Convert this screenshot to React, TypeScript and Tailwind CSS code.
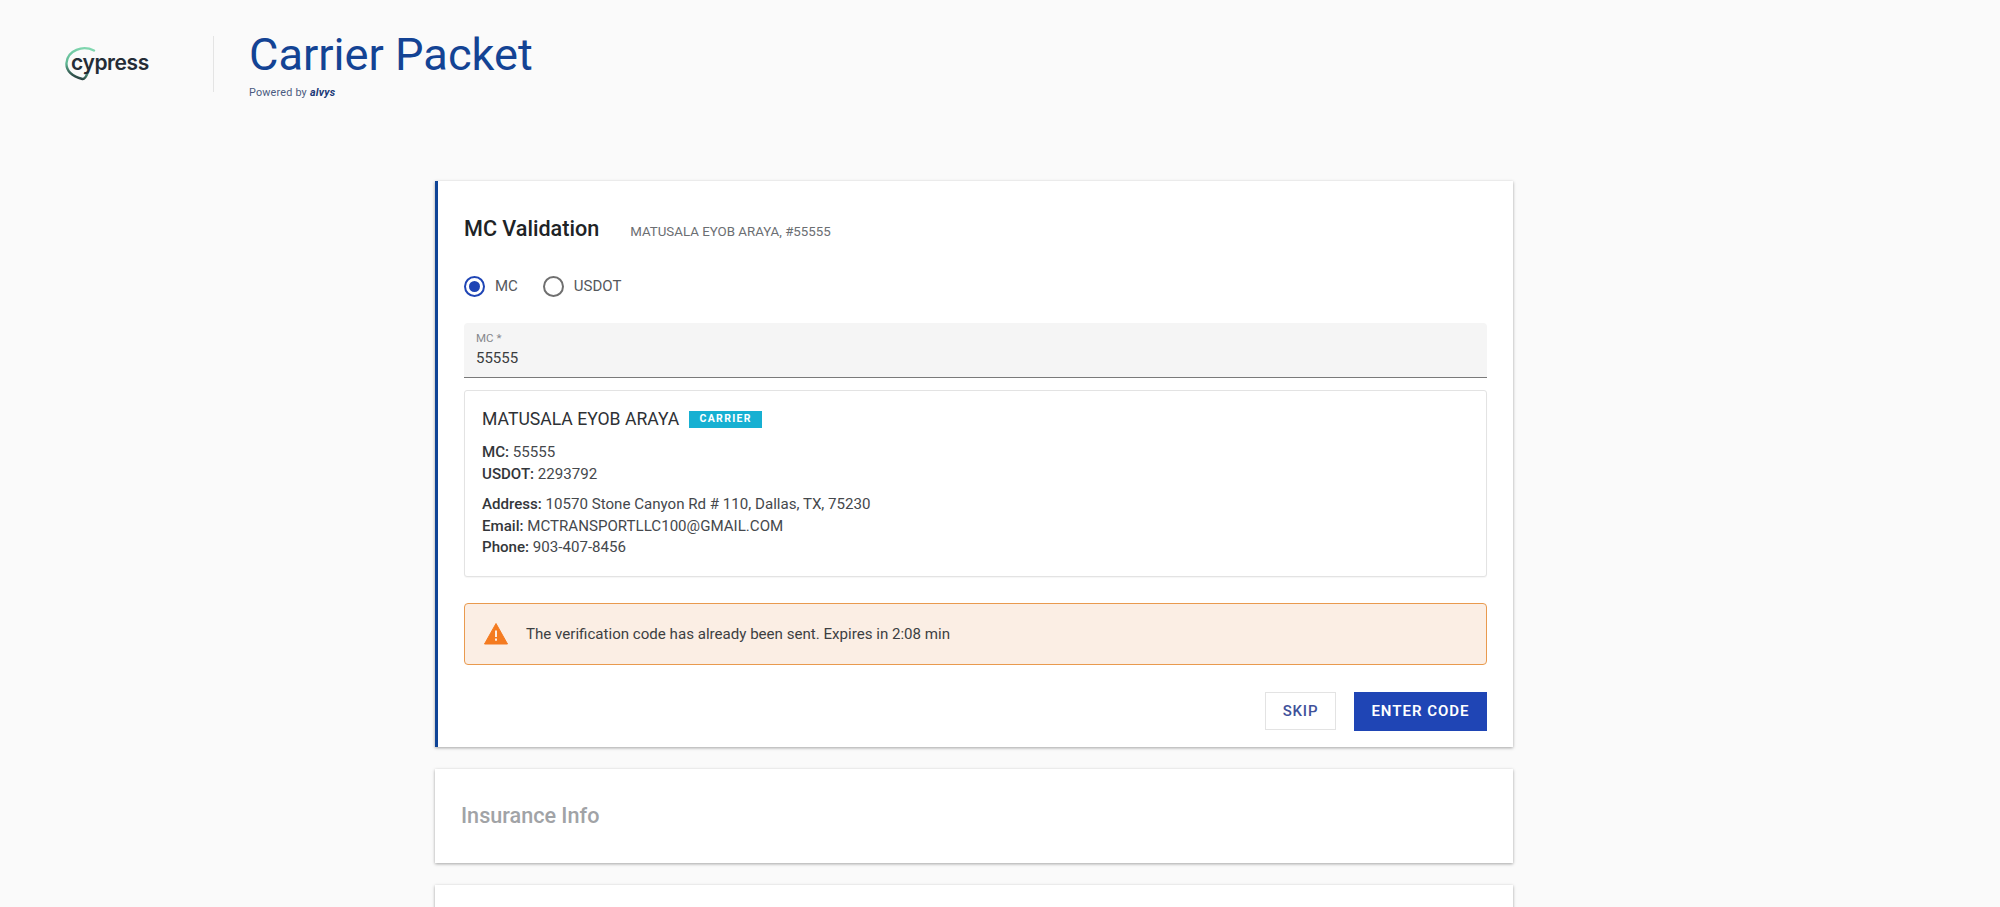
import React from "react";

function Logo() {
  return (
    <div className="relative w-[94px] h-[52px]">
      <svg className="absolute left-0 top-0" width="60" height="52" viewBox="0 0 60 52" fill="none">
        <defs>
          <linearGradient id="g" x1="25" y1="0" x2="14" y2="36" gradientUnits="userSpaceOnUse">
            <stop offset="0" stopColor="#86dcb4" />
            <stop offset="0.65" stopColor="#5fb894" />
            <stop offset="1" stopColor="#1f2a30" />
          </linearGradient>
        </defs>
        <path d="M29 5.5 C18 0 2.5 5 1.5 18 C1 26 7 31 17.5 34 C20 34.5 21.5 31 23 27" stroke="url(#g)" strokeWidth="2.4" strokeLinecap="round" />
      </svg>
      <span className="absolute left-[6px] top-[3px] text-[21px] leading-[30px] font-semibold tracking-[-0.4px] text-[#242c36] font-['Inter',sans-serif]">
        cypress
      </span>
    </div>
  );
}

function Row({ label, value }: { label: string; value: string }) {
  return (
    <div className="h-[21.5px] leading-[21.5px]">
      <span className="font-medium text-[#33363a]">{label}:</span> {value}
    </div>
  );
}

function Radio({ checked, label }: { checked?: boolean; label: string }) {
  return (
    <label className="flex items-center gap-[10px]">
      <span
        className={
          checked
            ? "flex w-[21px] h-[21px] items-center justify-center rounded-full border-2 border-[#1f45b5]"
            : "flex w-[21px] h-[21px] items-center justify-center rounded-full border-2 border-[#6f6f6f]"
        }
      >
        {checked && <span className="block w-[11px] h-[11px] rounded-full bg-[#1f45b5]" />}
      </span>
      <span className="text-[15px] text-[#55585c]">{label}</span>
    </label>
  );
}

export default function App() {
  return (
    <div className="h-[907px] overflow-hidden bg-[#fafafa] font-['Roboto',sans-serif]">
      <header className="flex h-[181px] items-start pl-[65px] pt-[36px]">
        <div className="w-[148px] pt-[9px]">
          <Logo />
        </div>
        <div className="w-px h-[56px] bg-[#e4e4e4]" />
        <div className="pl-[35px] -mt-[8px]">
          <h1 className="text-[45.2px] leading-[54px] font-normal text-[#134394]">Carrier Packet</h1>
          <div className="flex items-baseline gap-[3px] mt-[5px] text-[10.8px] leading-[12px] tracking-[0.2px] text-[#4a5a80]">
            <span>Powered by</span>
            <span className="font-bold italic text-[#1d3a78]">alvys</span>
          </div>
        </div>
      </header>

      <main className="ml-[435px] flex w-[1078px] flex-col gap-[22px]">
        <section className="h-[566px] border-l-[3px] border-[#0f4496] bg-white pl-[26px] pr-[26px] pt-[34px] shadow-[0_1px_3px_rgba(0,0,0,0.35)]">
          <div className="flex items-baseline">
            <h2 className="text-[21.6px] leading-[28px] font-medium text-[#202326]">MC Validation</h2>
            <span className="ml-[31px] text-[13.3px] text-[#6b6e72]">MATUSALA EYOB ARAYA, #55555</span>
          </div>

          <div className="mt-[31px] flex h-[24px] items-center gap-[25px]">
            <Radio checked label="MC" />
            <Radio label="USDOT" />
          </div>

          <div className="mt-[25px] h-[55px] rounded-t-[4px] border-b border-[#7a7a7a] bg-[#f5f5f5] px-[12px] pt-[9px]">
            <div className="text-[11.5px] leading-[13px] text-[#85888c]">MC *</div>
            <div className="mt-[3px] text-[15px] leading-[20px] text-[#3a3d40]">55555</div>
          </div>

          <div className="mt-[12px] h-[187px] rounded-[3px] border border-[#e3e3e3] bg-white pl-[17px] pt-[16px] text-[15.1px] text-[#45484c] shadow-[0_1px_1px_rgba(0,0,0,0.04)]">
            <div className="flex items-center">
              <span className="text-[17.6px] leading-[24px] text-[#2e3135]">MATUSALA EYOB ARAYA</span>
              <span className="ml-[10px] flex h-[17px] w-[73px] items-center justify-center bg-[#17b0d2] text-[10.5px] font-bold tracking-[1.3px] text-white">
                CARRIER
              </span>
            </div>
            <div className="mt-[11px]">
              <Row label="MC" value="55555" />
              <Row label="USDOT" value="2293792" />
            </div>
            <div className="mt-[9px]">
              <Row label="Address" value="10570 Stone Canyon Rd # 110, Dallas, TX, 75230" />
              <Row label="Email" value="MCTRANSPORTLLC100@GMAIL.COM" />
              <Row label="Phone" value="903-407-8456" />
            </div>
          </div>

          <div className="mt-[26px] flex h-[62px] items-center rounded-[4px] border border-[#e99a4e] bg-[#fbeee4] pl-[19px]">
            <svg width="24" height="22" viewBox="0 0 24 22" aria-hidden="true">
              <path d="M12 0.5 L23.5 21 L0.5 21 Z" fill="#f47b20" stroke="#f47b20" strokeLinejoin="round" />
              <rect x="11" y="7.5" width="2" height="6.5" fill="#fbeee4" />
              <rect x="11" y="15.5" width="2" height="2.2" fill="#fbeee4" />
            </svg>
            <span className="ml-[18px] text-[15.1px] text-[#3d3f42]">
              The verification code has already been sent. Expires in 2:08 min
            </span>
          </div>

          <div className="mt-[27px] flex justify-end gap-[18px]">
            <button className="h-[38px] w-[71px] border border-[#e3e3e3] bg-white text-[15px] font-medium tracking-[0.8px] text-[#3f519a]">
              SKIP
            </button>
            <button className="h-[39px] w-[133px] bg-[#1f45b5] text-[15px] font-semibold tracking-[1px] text-white">
              ENTER CODE
            </button>
          </div>
        </section>

        <section className="flex h-[94px] items-center bg-white pl-[26px] pt-[1px] shadow-[0_1px_3px_rgba(0,0,0,0.35)]">
          <h2 className="text-[21.6px] font-medium text-[#a1a3a6]">Insurance Info</h2>
        </section>

        <section className="h-[94px] bg-white shadow-[0_1px_3px_rgba(0,0,0,0.35)]" />
      </main>
    </div>
  );
}
